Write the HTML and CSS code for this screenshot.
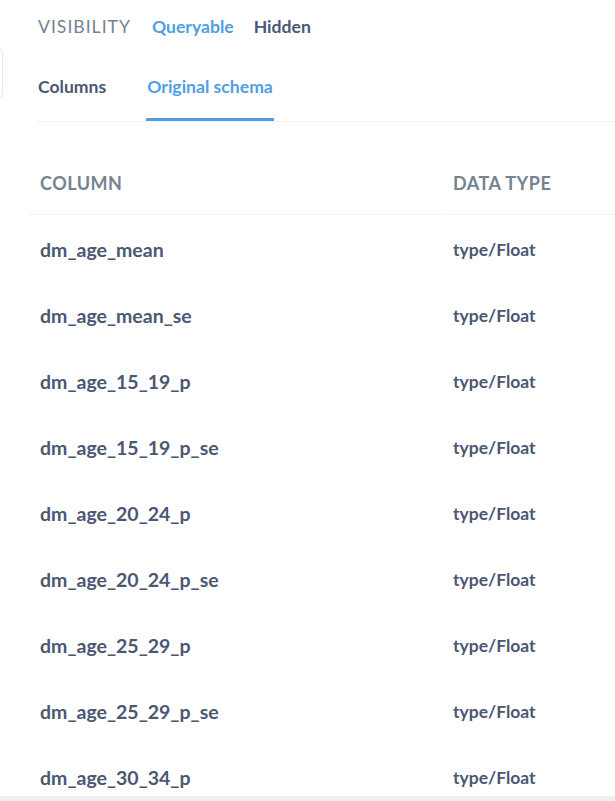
FILE: index.html
```html
<!DOCTYPE html>
<html>
<head>
<meta charset="utf-8">
<link rel="stylesheet" href="styles.css">
</head>
<body>
<div class="page">
  <div class="sidebar"><div class="side-box"></div></div>
  <div class="main">
    <div class="visibility">
      <span class="vis-label">VISIBILITY</span>
      <span class="vis-opt active">Queryable</span>
      <span class="vis-opt">Hidden</span>
    </div>
    <div class="tabs">
      <div class="tab">Columns</div>
      <div class="tab active">Original schema</div>
    </div>
    <table class="schema">
      <thead>
        <tr><th class="c1">COLUMN</th><th class="c2">DATA TYPE</th></tr>
      </thead>
      <tbody>
        <tr><td class="name">dm_age_mean</td><td class="type">type/Float</td></tr>
        <tr><td class="name">dm_age_mean_se</td><td class="type">type/Float</td></tr>
        <tr><td class="name">dm_age_15_19_p</td><td class="type">type/Float</td></tr>
        <tr><td class="name">dm_age_15_19_p_se</td><td class="type">type/Float</td></tr>
        <tr><td class="name">dm_age_20_24_p</td><td class="type">type/Float</td></tr>
        <tr><td class="name">dm_age_20_24_p_se</td><td class="type">type/Float</td></tr>
        <tr><td class="name">dm_age_25_29_p</td><td class="type">type/Float</td></tr>
        <tr><td class="name">dm_age_25_29_p_se</td><td class="type">type/Float</td></tr>
        <tr><td class="name">dm_age_30_34_p</td><td class="type">type/Float</td></tr>
      </tbody>
    </table>
  </div>
</div>
<div class="bottom-band"></div>
</body>
</html>
```
FILE: styles.css
```css
html, body {
  margin: 0;
  padding: 0;
  background: #fff;
  overflow: hidden;
  height: 801px;
  font-family: Lato, "Noto Sans", sans-serif;
  color: #4c5773;
}
.page {
  display: flex;
  height: 796px;
  overflow: hidden;
}
.sidebar {
  width: 4px;
  flex: none;
}
.side-box {
  width: 100px;
  height: 51px;
  margin-left: -97px;
  margin-top: 48px;
  border: 1px solid #e8e9ea;
  border-radius: 6px;
  box-sizing: border-box;
}
.main {
  flex: 1;
  padding-left: 34px;
  min-width: 0;
}
.visibility {
  display: flex;
  align-items: center;
  height: 52px;
  font-size: 17.6px;
}
.vis-label {
  color: #74838f;
  letter-spacing: 1px;
  font-weight: 400;
  margin-right: 21px;
}
.vis-opt {
  font-weight: 700;
  color: #4c5773;
  margin-right: 20px;
}
.vis-opt.active {
  color: #509ee3;
}
.tabs {
  display: flex;
  gap: 39px;
  border-bottom: 1px solid #eeeff0;
}
.tab {
  font-size: 17.6px;
  font-weight: 700;
  padding: 24px 1px 21px;
  border-bottom: 3px solid transparent;
}
.tab:first-child {
  padding-left: 0;
}
.tab.active {
  color: #509ee3;
  border-bottom-color: #509ee3;
}
.schema {
  margin-left: -10px;
  margin-top: 30px;
  border-collapse: separate;
  border-spacing: 2px 0;
  width: 720px;
}
.schema th {
  text-align: left;
  font-size: 18px;
  letter-spacing: 0.5px;
  font-weight: 700;
  color: #74838f;
  padding: 0 10px;
  height: 62px;
  border-bottom: 1px solid #eeeff0;
}
.schema th.c1 { width: 391px; }
.schema tbody tr {
  height: 66px;
}
.schema td {
  padding: 3px 10px 0;
  vertical-align: middle;
}
.schema td.name {
  font-size: 19.5px;
  font-weight: 700;
}
.schema td.type {
  font-size: 17.5px;
  font-weight: 700;
}
.bottom-band {
  height: 5px;
  background: #f0f0f1;
}
```
